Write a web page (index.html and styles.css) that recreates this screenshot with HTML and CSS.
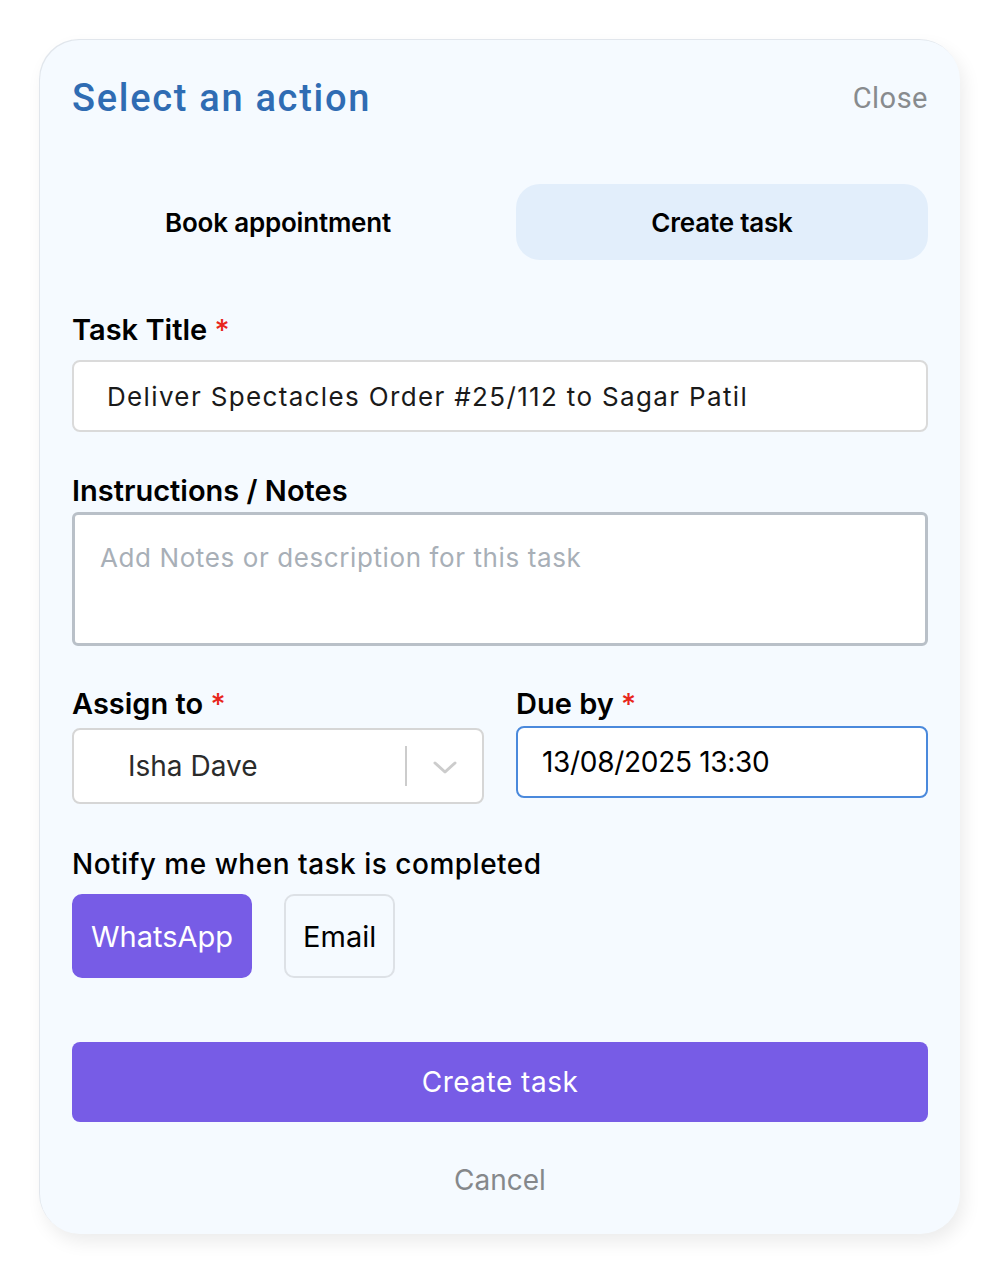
FILE: index.html
```html
<!DOCTYPE html>
<html lang="en">
<head>
    <meta charset="UTF-8">
    <meta name="viewport" content="width=device-width, initial-scale=1.0">
    <title>Select an action</title>
    <link rel="stylesheet" href="styles.css">
</head>
<body>

<div class="card">
    <!-- Header -->
    <div class="header">
        <h1>Select an action</h1>
        <span class="close">Close</span>
    </div>

    <!-- Tabs -->
    <div class="tabs">
        <div class="tab">Book appointment</div>
        <div class="tab active">Create task</div>
    </div>

    <label class="label label-title">Task Title <span class="req">*</span></label>
    <div class="input input-title">Deliver Spectacles Order #25/112 to Sagar Patil</div>

    <label class="label label-notes">Instructions / Notes</label>
    <div class="textarea"><span class="placeholder">Add Notes or description for this task</span></div>

    <div class="row">
        <div class="col">
            <label class="label">Assign to <span class="req">*</span></label>
            <div class="select">
                <span class="select-value">Isha Dave</span>
                <span class="select-sep"></span>
                <svg class="chevron" width="24" height="14" viewBox="0 0 24 14">
                    <path d="M2 2 L12 11 L22 2" fill="none" stroke="#cccccc" stroke-width="3" stroke-linecap="round" stroke-linejoin="round"/>
                </svg>
            </div>
        </div>
        <div class="col">
            <label class="label">Due by <span class="req">*</span></label>
            <div class="input input-due">13/08/2025 13:30</div>
        </div>
    </div>

    <label class="label label-notify">Notify me when task is completed</label>
    <div class="channels">
        <button class="chip chip-on">WhatsApp</button>
        <button class="chip">Email</button>
    </div>

    <button class="submit">Create task</button>
    <div class="cancel">Cancel</div>
</div>

</body>
</html>
```

FILE: styles.css
```css
body {
    margin: 0;
    padding: 40px;
    background-color: #fff;
    font-family: Inter, "Noto Sans", sans-serif;
    color: #111;
}
.card {
    width: 920px;
    height: 1194px;
    box-sizing: border-box;
    padding: 32px 32px 0;
    background-color: #f5faff;
    border-radius: 40px;
    box-shadow: -1px -1px 0 #e1e6ec, 4px 8px 18px rgba(0, 0, 0, 0.08);
    display: flex;
    flex-direction: column;
}
.header {
    display: flex;
    justify-content: space-between;
    align-items: center;
    height: 52px;
}
h1 {
    margin: 0;
    font-family: Roboto, sans-serif;
    font-size: 38px;
    font-weight: 500;
    letter-spacing: 1.7px;
    color: #2f6cb3;
}
.close {
    font-family: Roboto, sans-serif;
    font-size: 29px;
    color: #888b8e;
    letter-spacing: 0.5px;
}
.tabs {
    display: grid;
    grid-template-columns: 1fr 1fr;
    gap: 32px;
    margin-top: 60px;
}
.tab {
    height: 76px;
    border-radius: 24px;
    display: flex;
    align-items: center;
    justify-content: center;
    font-size: 26px;
    font-weight: 600;
    letter-spacing: -0.2px;
    color: #000;
}
.tab.active {
    background-color: #e2eefb;
}
.label {
    display: block;
    font-size: 29px;
    font-weight: 600;
    letter-spacing: 0;
    line-height: 32px;
    color: #000;
}
.req {
    color: #e8261c;
    font-weight: 500;
}
.label-title {
    margin-top: 54px;
}
.input {
    height: 72px;
    box-sizing: border-box;
    background-color: #fff;
    border: 2px solid #dadada;
    border-radius: 8px;
    display: flex;
    align-items: center;
    font-size: 26px;
}
.input-title {
    margin-top: 14px;
    padding-left: 33px;
    letter-spacing: 1.35px;
    color: #1a1a1a;
}
.label-notes {
    margin-top: 43px;
}
.textarea {
    margin-top: 5px;
    height: 134px;
    box-sizing: border-box;
    background-color: #fff;
    border: 3px solid #b9c0c8;
    border-radius: 6px;
    padding: 27px 25px;
}
.placeholder {
    font-size: 26px;
    color: #a8afb7;
    letter-spacing: 0.6px;
}
.row {
    display: grid;
    grid-template-columns: 1fr 1fr;
    gap: 32px;
    margin-top: 42px;
}
.select {
    margin-top: 8px;
    height: 76px;
    box-sizing: border-box;
    background-color: #fff;
    border: 2px solid #d6d6d6;
    border-radius: 8px;
    display: flex;
    align-items: center;
    padding-left: 54px;
}
.select-value {
    flex: 1;
    font-size: 28px;
    color: #2b2b2b;
    letter-spacing: 0;
}
.select-sep {
    width: 2px;
    height: 40px;
    background-color: #cccccc;
}
.chevron {
    margin: 4px 25px 0 26px;
}
.input-due {
    margin-top: 6px;
    border: 2px solid #4a89dc;
    padding-left: 24px;
    font-size: 28px;
    letter-spacing: -0.3px;
    color: #000;
}
.label-notify {
    margin-top: 44px;
    font-weight: 500;
    letter-spacing: 0.5px;
    font-size: 28px;
}
.channels {
    display: flex;
    gap: 32px;
    margin-top: 14px;
}
.chip {
    height: 84px;
    padding: 0 17px;
    border-radius: 10px;
    border: 2px solid #dde1e6;
    background-color: transparent;
    font-family: Inter, "Noto Sans", sans-serif;
    font-size: 29px;
    color: #000;
    cursor: pointer;
}
.chip-on {
    background-color: #775ce6;
    border-color: #775ce6;
    color: #fff;
}
.submit {
    margin-top: 64px;
    height: 80px;
    border: none;
    border-radius: 8px;
    background-color: #775ce6;
    color: #fff;
    font-family: Inter, "Noto Sans", sans-serif;
    font-size: 28px;
    letter-spacing: 0.5px;
    cursor: pointer;
}
.cancel {
    margin-top: 40px;
    text-align: center;
    font-size: 28px;
    line-height: 36px;
    color: #85888b;
    letter-spacing: 0;
}
```
